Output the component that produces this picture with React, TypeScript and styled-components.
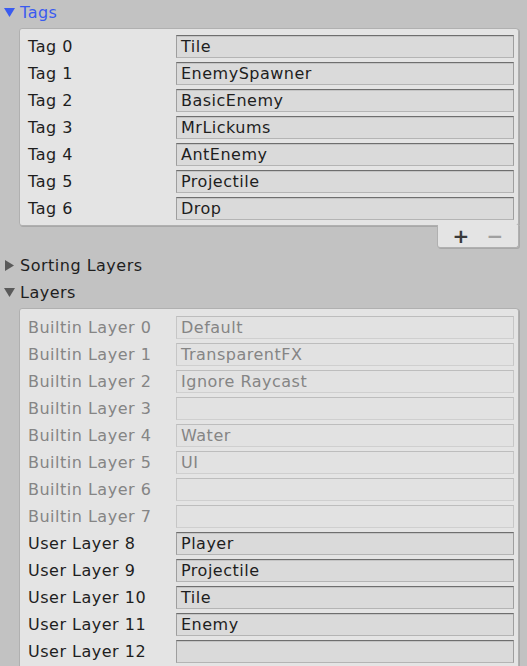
import React from "react";
import styled, { createGlobalStyle } from "styled-components";

const Global = createGlobalStyle`
  html, body { margin: 0; padding: 0; background: #c2c2c2; overflow: hidden; }
  body { width: 527px; height: 666px; font-family: "DejaVu Sans", Verdana, sans-serif; }
`;

const Page = styled.div`
  width: 527px;
  height: 666px;
  overflow: hidden;
  background: #c2c2c2;
  display: flex;
  flex-direction: column;
  & > * { flex-shrink: 0; }
`;

const Foldout = styled.div<{ $mt: number }>`
  display: flex;
  align-items: center;
  height: 24px;
  margin-top: ${(p) => p.$mt}px;
  padding-left: 4px;
  gap: 5px;
  font-size: 16px;
  letter-spacing: 0.5px;
`;

const FoldTitle = styled.span<{ $active?: boolean }>`
  color: ${(p) => (p.$active ? "#3a5bf0" : "#1e1e1e")};
`;

const Arrow = styled.svg`
  width: 11px;
  height: 11px;
  flex: none;
`;

const Panel = styled.div<{ $pt: number }>`
  margin: 4px 8px 0 19px;
  background: #e4e4e4;
  border: 1px solid #b0b0b0;
  border-radius: 3px;
  box-shadow: 1px 1px 0 #a8a8a8;
  padding: ${(p) => p.$pt}px 4px 5px 8px;
  display: flex;
  flex-direction: column;
  gap: 4px;
`;

const Row = styled.div`
  display: flex;
  align-items: center;
  height: 23px;
  flex: none;
`;

const Label = styled.div<{ $disabled?: boolean }>`
  width: 148px;
  flex: none;
  font-size: 16px;
  letter-spacing: 0.5px;
  color: ${(p) => (p.$disabled ? "#858585" : "#1e1e1e")};
  white-space: nowrap;
`;

const Field = styled.div<{ $disabled?: boolean }>`
  flex: 1;
  height: 23px;
  box-sizing: border-box;
  padding: 0 4px;
  display: flex;
  align-items: center;
  font-size: 16px;
  letter-spacing: 0.5px;
  white-space: nowrap;
  color: ${(p) => (p.$disabled ? "#858585" : "#1e1e1e")};
  background: ${(p) => (p.$disabled ? "#e2e2e2" : "#dadada")};
  border: 1px solid ${(p) => (p.$disabled ? "#c6c6c6" : "#9e9e9e")};
  border-top-color: ${(p) => (p.$disabled ? "#bdbdbd" : "#6e6e6e")};
  border-bottom-color: ${(p) => (p.$disabled ? "#cfcfcf" : "#b4b4b4")};
  box-shadow: ${(p) => (p.$disabled ? "none" : "inset 0 1px 0 #c4c4c4")};
`;

const Footer = styled.div`
  align-self: flex-end;
  margin-right: 8px;
  margin-top: -1px;
  width: 82px;
  height: 23px;
  box-sizing: border-box;
  background: #e4e4e4;
  border: 1px solid #b0b0b0;
  border-top: none;
  border-radius: 0 0 3px 3px;
  box-shadow: 1px 1px 0 #a8a8a8;
  display: flex;
  align-items: center;
  justify-content: space-around;
  padding: 0 6px;
  position: relative;
  z-index: 1;
`;

const FootBtn = styled.span<{ $muted?: boolean }>`
  font-family: "DejaVu Sans", sans-serif;
  font-size: 20px;
  font-weight: bold;
  line-height: 1;
  color: ${(p) => (p.$muted ? "#a0a0a0" : "#3a3a3a")};
`;

const tags = ["Tile", "EnemySpawner", "BasicEnemy", "MrLickums", "AntEnemy", "Projectile", "Drop"];

const builtin = ["Default", "TransparentFX", "Ignore Raycast", "", "Water", "UI", "", ""];
const user: Record<number, string> = { 8: "Player", 9: "Projectile", 10: "Tile", 11: "Enemy" };

const Down = ({ color }: { color: string }) => (
  <Arrow viewBox="0 0 11 11">
    <polygon points="0,1 11,1 5.5,10" fill={color} />
  </Arrow>
);
const RightArrow = ({ color }: { color: string }) => (
  <Arrow viewBox="0 0 11 11">
    <polygon points="1,0 10,5.5 1,11" fill={color} />
  </Arrow>
);

export default function App() {
  const layers: { label: string; value: string; disabled: boolean }[] = [];
  for (let i = 0; i < 13; i++) {
    if (i < 8) layers.push({ label: `Builtin Layer ${i}`, value: builtin[i], disabled: true });
    else layers.push({ label: `User Layer ${i}`, value: user[i] ?? "", disabled: false });
  }
  return (
    <Page>
      <Global />
      <Foldout $mt={0}>
        <Down color="#3a5bf0" />
        <FoldTitle $active>Tags</FoldTitle>
      </Foldout>
      <Panel $pt={6}>
        {tags.map((t, i) => (
          <Row key={i}>
            <Label>Tag {i}</Label>
            <Field>{t}</Field>
          </Row>
        ))}
      </Panel>
      <Footer>
        <FootBtn>+</FootBtn>
        <FootBtn $muted>−</FootBtn>
      </Footer>
      <Foldout $mt={5}>
        <RightArrow color="#5a5a5a" />
        <FoldTitle>Sorting Layers</FoldTitle>
      </Foldout>
      <Foldout $mt={3}>
        <Down color="#5a5a5a" />
        <FoldTitle>Layers</FoldTitle>
      </Foldout>
      <Panel $pt={7}>
        {layers.map((l, i) => (
          <Row key={i}>
            <Label $disabled={l.disabled}>{l.label}</Label>
            <Field $disabled={l.disabled}>{l.value}</Field>
          </Row>
        ))}
      </Panel>
    </Page>
  );
}
